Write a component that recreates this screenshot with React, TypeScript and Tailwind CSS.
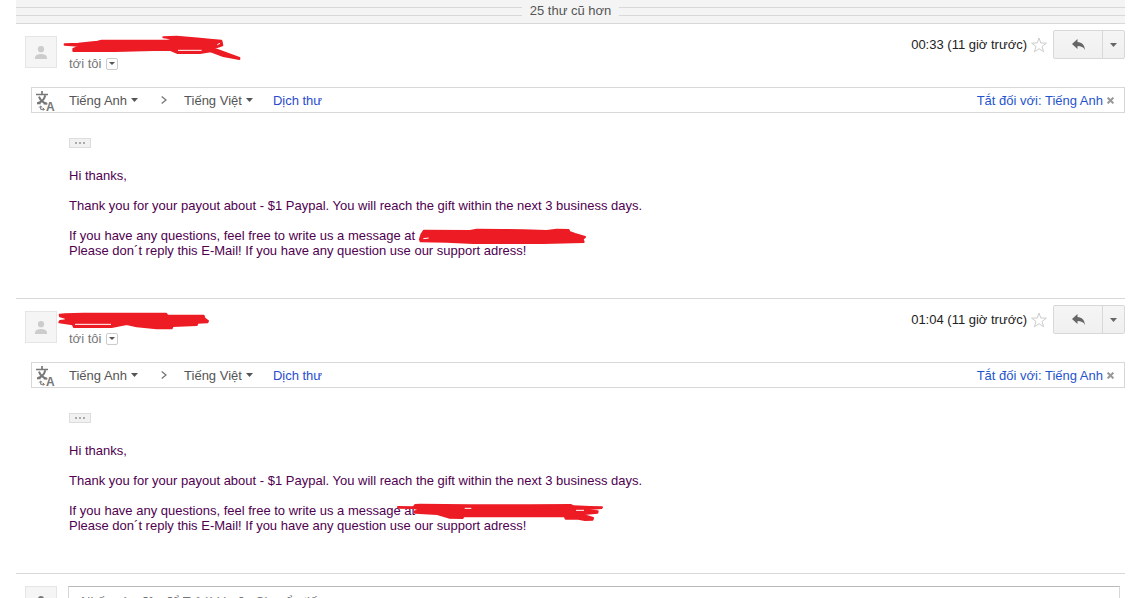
import * as React from "react"

interface Scribble {
  viewBox: string
  path: string
  gaps: string
  className: string
}

interface Message {
  id: string
  time: string
  sender: Scribble
  address: Scribble
}

const MESSAGES: Message[] = [
  {
    id: "first",
    time: "00:33 (11 giờ trước)",
    sender: {
      viewBox: "144 102 552 84",
      path: "M164 133L205 131L262 125L275 122L470 122L502 118L460 112L500 110L570 116L600 119L634 122L637 136L610 145L688 174L688 177L640 168L602 154L570 159L503 159L482 150L430 150L315 153L190 153L190 147L204 141L206 137L164 134Z",
      gaps: "M504 151H575M622 134L630 130",
      className: "-left-[11px] -top-[2px] h-[28px] w-[184px]",
    },
    address: {
      viewBox: "18 24 516 51",
      path: "M30 58L34 44L42 32L180 33L200 29L280 30L340 31L410 33L440 29L476 30L478 36L495 42L525 51L518 57L521 66L400 69L190 69L110 65L32 64Z",
      gaps: "M40 56L56 54",
      className: "left-[347px] top-[60px] h-[17px] w-[172px]",
    },
  },
  {
    id: "second",
    time: "01:04 (11 giờ trước)",
    sender: {
      viewBox: "144 66 456 54",
      path: "M149 74L165 73L220 71L468 71L472 77L581 77L583 85L594 93L592 97L563 98L560 105L488 108L485 115L440 115L380 109L350 102L305 111L192 111L188 103L148 97L150 93L168 91L166 83L150 79Z",
      gaps: "M195 103H303",
      className: "-left-[11px] top-px h-[18px] w-[152px]",
    },
    address: {
      viewBox: "18 21 624 60",
      path: "M24 36L70 37L76 30L90 29L240 31L420 31L543 30L550 34L600 36L636 37L634 39L590 43L590 46L623 49L622 53L575 58L609 69L608 74L585 75L565 71L527 71L524 64L400 64L220 64L218 69L177 68L142 57L75 53L75 49L97 46L72 39L26 38Z",
      gaps: "M224 40H244M558 46H582",
      className: "left-[327px] top-[59px] h-[20px] w-[208px]",
    },
  },
]

const Redaction: React.FC<{ scribble: Scribble }> = ({ scribble }) => (
  <svg
    viewBox={scribble.viewBox}
    className={`absolute ${scribble.className}`}
    aria-hidden="true"
  >
    <path
      d={scribble.path}
      fill="#ed1c24"
      stroke="#ed1c24"
      strokeWidth="6"
      strokeLinejoin="round"
    />
    <path d={scribble.gaps} stroke="#fff" strokeWidth="3" fill="none" />
  </svg>
)

const Caret: React.FC = () => (
  <svg viewBox="0 0 7 4" className="h-1 w-[7px]" aria-hidden="true">
    <path d="M0 0h7L3.5 4z" fill="currentColor" />
  </svg>
)

const Avatar: React.FC<{ className: string }> = ({ className }) => (
  <div
    className={`flex size-8 shrink-0 items-center justify-center border border-[#e5e5e5] bg-[#f5f5f5] ${className}`}
  >
    <svg viewBox="0 0 12 13" className="h-[13px] w-3" aria-hidden="true">
      <circle cx="6" cy="3.2" r="3.1" fill="currentColor" />
      <path
        d="M0 13v-1.4C0 9 3.5 8 6 8s6 1 6 3.6V13z"
        fill="currentColor"
      />
    </svg>
  </div>
)

const TranslateIcon: React.FC = () => (
  <svg
    viewBox="45 24 63 78"
    className="h-[26px] w-[21px] shrink-0 self-start text-[#777]"
    aria-hidden="true"
  >
    <g fill="none" stroke="currentColor">
      <path d="M48 43.5H84M66 33V44" strokeWidth="5" />
      <path
        d="M76 46C73 58 66 66 52 70M57 50C61 61 69 68 80 71"
        strokeWidth="6"
      />
      <path d="M51 70.5H62M71 71H82" strokeWidth="5" />
      <path
        d="M57 83L62 78L67 83M62 79V88H73M69 84L73 88L69 92"
        strokeWidth="3"
      />
    </g>
    <text
      x="78"
      y="93"
      fontSize="36"
      fontWeight="700"
      fontFamily="Liberation Sans, sans-serif"
      fill="currentColor"
    >
      A
    </text>
  </svg>
)

const LanguageSelect: React.FC<{ label: string; initial: string }> = ({
  label,
  initial,
}) => (
  <label className="flex items-center gap-1 text-[#555]">
    <select
      aria-label={label}
      defaultValue={initial}
      className="field-sizing-content appearance-none focus:outline-none"
    >
      <option>Tiếng Anh</option>
      <option>Tiếng Việt</option>
    </select>
    <Caret />
  </label>
)

const TranslateBar: React.FC = () => (
  <div className="ml-[15px] flex h-[26px] items-center border border-[#d8d8d8] pl-[3px] pr-[10px]">
    <TranslateIcon />
    <div className="ml-[13px] flex items-center">
      <LanguageSelect label="Dịch từ" initial="Tiếng Anh" />
      <svg
        viewBox="0 0 6 8"
        className="ml-[23px] mr-[17px] h-2 w-1.5"
        aria-hidden="true"
      >
        <path
          d="M.7.5L5 4L.7 7.5"
          fill="none"
          stroke="#777"
          strokeWidth="1.3"
        />
      </svg>
      <LanguageSelect label="Dịch sang" initial="Tiếng Việt" />
      <a href="#translate" className="ml-5 text-[#2a4bd0]">
        Dịch thư
      </a>
    </div>
    <a href="#disable" className="ml-auto text-[#1f55cc]">
      Tắt đối với: Tiếng Anh
    </a>
    <button type="button" aria-label="Đóng" className="ml-1 text-[#999]">
      <svg viewBox="0 0 7 7" className="size-[7px]" aria-hidden="true">
        <path
          d="M.6.6l5.8 5.8M6.4.6L.6 6.4"
          stroke="currentColor"
          strokeWidth="2"
        />
      </svg>
    </button>
  </div>
)

const MessageActions: React.FC<{ time: string }> = ({ time }) => {
  const [starred, setStarred] = React.useState(false)

  return (
    <div className="flex items-center pt-1.5">
      <span className="text-[#222]">{time}</span>
      <button
        type="button"
        aria-label="Gắn dấu sao"
        aria-pressed={starred}
        onClick={() => setStarred(!starred)}
        className="ml-1 mr-1.5"
      >
        <svg viewBox="0 0 16 16" className="size-4" aria-hidden="true">
          <path
            d="M8 1l1.8 5 5.6.1-4.4 3.4 1.6 5.3L8 11.7l-4.6 3.1L5 9.5.6 6.1 6.2 6z"
            fill={starred ? "#f5c518" : "#fff"}
            stroke="#ccc"
          />
        </svg>
      </button>
      <div className="flex h-[29px] rounded-xs border border-[#d8d8d8] bg-linear-to-b from-[#f5f5f5] to-[#f0f0f0] text-[#666]">
        <button
          type="button"
          aria-label="Trả lời"
          className="flex w-12 items-center justify-center"
        >
          <svg
            viewBox="0 0 13 11"
            className="h-[11px] w-[13px]"
            aria-hidden="true"
          >
            <path
              d="M5.5 0L0 5L5.5 10V7C9 7 11.5 8 13 11C12.6 6 10 3.2 5.5 3Z"
              fill="currentColor"
            />
          </svg>
        </button>
        <button
          type="button"
          aria-label="Khác"
          className="flex w-[22px] items-center justify-center border-l border-[#d8d8d8]"
        >
          <Caret />
        </button>
      </div>
    </div>
  )
}

const MessageItem: React.FC<{ message: Message }> = ({ message }) => (
  <article className="border-b border-[#d8d8d8] pb-10">
    <header className="flex h-[63px] items-start pl-[9px]">
      <Avatar className="mt-3 text-[#ccc]" />
      <div className="relative ml-3 mt-3 flex-1 pt-5">
        <Redaction scribble={message.sender} />
        <div className="flex items-center gap-[5px] text-[#777]">
          tới tôi
          <button
            type="button"
            aria-label="Hiển thị chi tiết"
            className="flex size-3 items-center justify-center rounded-xs border border-[#ccc] text-[#555]"
          >
            <svg viewBox="0 0 6 3" className="h-[3px] w-1.5" aria-hidden="true">
              <path d="M0 0h6L3 3z" fill="currentColor" />
            </svg>
          </button>
        </div>
      </div>
      <MessageActions time={message.time} />
    </header>
    <TranslateBar />
    <div className="pl-[53px] pt-[25px]">
      <button
        type="button"
        aria-label="Hiển thị nội dung được rút gọn"
        className="flex h-[10px] w-[22px] items-center justify-center gap-0.5 border border-[#ddd] bg-[#f1f1f1]"
      >
        <span className="size-0.5 bg-[#aaa]" />
        <span className="size-0.5 bg-[#aaa]" />
        <span className="size-0.5 bg-[#aaa]" />
      </button>
      <div className="relative mt-5 text-[#500050]">
        <p>Hi thanks,</p>
        <p className="mt-[15px]">
          Thank you for your payout about - $1 Paypal. You will reach the gift
          within the next 3 business days.
        </p>
        <p className="mt-[15px]">
          If you have any questions, feel free to write us a message at
          <br />
          Please don´t reply this E-Mail! If you have any question use our
          support adress!
        </p>
        <Redaction scribble={message.address} />
      </div>
    </div>
  </article>
)

const App: React.FC = () => (
  <main className="h-screen overflow-hidden bg-white pl-4 pr-[18px] font-['Liberation_Sans',Arial,sans-serif] text-[13px] leading-[15px]">
    <button
      type="button"
      className="flex h-6 w-full items-start border-b border-[#d8d8d8] bg-[#f4f4f4] text-[#555]"
    >
      <span className="mt-[7px] h-[9px] flex-1 border-y border-[#d8d8d8]" />
      <span className="px-2 pt-[3px]">25 thư cũ hơn</span>
      <span className="mt-[7px] h-[9px] flex-1 border-y border-[#d8d8d8]" />
    </button>
    {MESSAGES.map((message) => (
      <MessageItem key={message.id} message={message} />
    ))}
    <form className="flex items-start pl-[9px] pr-[5px] pt-3">
      <Avatar className="text-[#777]" />
      <textarea
        rows={4}
        aria-label="Trả lời"
        placeholder="Nhấp vào đây để Trả lời hoặc Chuyển tiếp"
        className="ml-[11px] flex-1 resize-none border border-[#d8d8d8] border-t-[#b9b9b9] px-3 py-[7px] placeholder:text-[#777] focus:outline-none"
      />
    </form>
  </main>
)

export default App
